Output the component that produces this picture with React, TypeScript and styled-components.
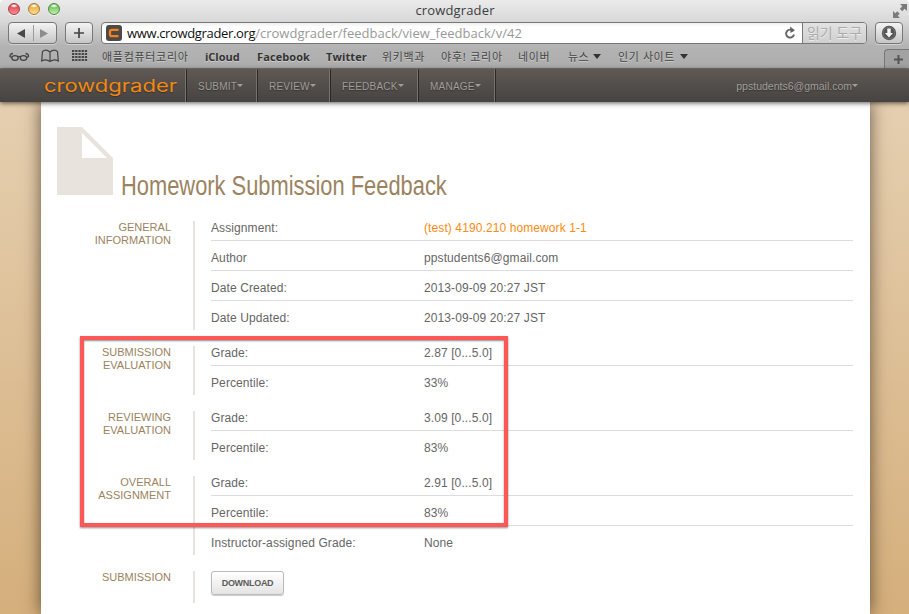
import React from "react";
import styled, { createGlobalStyle } from "styled-components";

const UI = `"Open Sans", "Noto Sans", "Noto Sans CJK KR", sans-serif`;
const BODY = `"Liberation Sans", Arial, sans-serif`;

const GlobalStyle = createGlobalStyle`
  * { box-sizing: border-box; }
  body { margin: 0; overflow: hidden; }
`;

const Window = styled.div`
  width: 909px;
  height: 614px;
  display: flex;
  flex-direction: column;
  overflow: hidden;
  font-family: ${UI};
  border-radius: 4px 4px 0 0;
`;

const Chrome = styled.header`
  height: 69px;
  flex: none;
  display: flex;
  flex-direction: column;
  background: linear-gradient(#ebebeb 0, #d9d9d9 20px, #b3b3b3 46px, #adadad 68px);
  border-bottom: 1px solid #7e7b78;
`;

const TitleBar = styled.div`
  height: 22px;
  flex: none;
  display: grid;
  grid-template-columns: 80px 1fr 80px;
  align-items: center;
  padding: 0 1px 3px 8px;
`;

const Lights = styled.div`
  display: flex;
  gap: 8px;
  margin-top: -1px;
`;

const Light = styled.span<{ $from: string; $to: string; $edge: string }>`
  width: 12px;
  height: 12px;
  border-radius: 50%;
  border: 1px solid ${(p) => p.$edge};
  background: radial-gradient(ellipse 4px 2px at 50% 18%, #fff 20%, transparent 100%),
    linear-gradient(${(p) => p.$from}, ${(p) => p.$to});
  box-shadow: 0 1px 0 #f4f4f4;
`;

const WindowTitle = styled.div`
  text-align: center;
  font-size: 13px;
  line-height: 18px;
  letter-spacing: 0.15px;
  color: #3d3d3d;
  padding-right: 6px;
`;

const Expand = styled.svg`
  justify-self: end;
  width: 16px;
  height: 16px;
`;

const Toolbar = styled.div`
  height: 22px;
  flex: none;
  display: flex;
  padding: 0 6px 0 8px;
`;

const Button = styled.div<{ $width: number; $gap: number }>`
  width: ${(p) => p.$width}px;
  height: 22px;
  flex: none;
  margin-right: ${(p) => p.$gap}px;
  display: flex;
  align-items: center;
  justify-content: center;
  border: 1px solid #777;
  border-radius: 4px;
  background: linear-gradient(#f4f4f4, #c6c6c6);
  box-shadow: 0 1px 0 #d2d2d2;
`;

const Address = styled.div`
  width: 766px;
  height: 22px;
  flex: none;
  margin-right: 8px;
  display: flex;
  align-items: center;
  overflow: hidden;
  border: 1px solid #777;
  border-radius: 4px;
  background: linear-gradient(#efefef, #fff 4px);
  font-size: 13px;
`;

const Favicon = styled.span`
  width: 16px;
  height: 16px;
  flex: none;
  margin: 0 5px 0 4px;
  display: flex;
  align-items: center;
  justify-content: center;
  border-radius: 3px;
  background: #4c4947;
`;

const Host = styled.span`
  color: #111;
  letter-spacing: -0.35px;
  line-height: 20px;
`;

const Path = styled.span`
  color: #999;
  letter-spacing: 0.02px;
  line-height: 20px;
  flex: 1;
`;

const Reader = styled.span`
  width: 64px;
  height: 20px;
  flex: none;
  margin-left: 6px;
  border-left: 1px solid #777;
  background: linear-gradient(#e2e2e2, #cfcfcf);
  color: #aaa;
  font-size: 14px;
  line-height: 19px;
  text-align: center;
  white-space: nowrap;
  text-shadow: 0 1px 0 #eee;
`;

const Bookmarks = styled.div`
  height: 24px;
  flex: none;
  display: flex;
  align-items: center;
  font-size: 11px;
  line-height: 24px;
  padding-left: 8px;
  color: #333;
  text-shadow: 0 1px 0 #ccc;
`;

const Glyph = styled.svg<{ $gap: number }>`
  flex: none;
  margin-right: ${(p) => p.$gap}px;
`;

const Bookmark = styled.span<{ $width: number; $bold?: boolean; $track?: number }>`
  flex: none;
  width: ${(p) => p.$width}px;
  padding-top: 1px;
  font-weight: ${(p) => (p.$bold ? 700 : 400)};
  letter-spacing: ${(p) => p.$track ?? 0}px;
  color: ${(p) => (p.$bold ? "#333" : "#444")};
  white-space: nowrap;
`;

const Arrow = styled.i<{ $size: number; $color: string; $gap: number }>`
  display: inline-block;
  vertical-align: middle;
  margin-left: ${(p) => p.$gap}px;
  margin-top: -3px;
  border: ${(p) => p.$size}px solid transparent;
  border-top: ${(p) => p.$size + (p.$size > 3 ? 1 : 0)}px solid ${(p) => p.$color};
  border-bottom: 0;
`;

const NewTab = styled.div`
  width: 25px;
  height: 19px;
  margin-left: auto;
  padding-left: 3px;
  align-self: flex-end;
  display: flex;
  align-items: center;
  justify-content: center;
  border: 1px solid #777;
  border-right: 0;
  border-bottom: 0;
  border-radius: 4px 0 0 0;
  background: #a2a2a2;
`;

const NavBar = styled.nav`
  height: 33px;
  flex: none;
  z-index: 1;
  display: flex;
  padding-left: 45px;
  background: linear-gradient(#5e5955, #474340);
  box-shadow: 0 1px 5px rgba(0, 0, 0, 0.65);
  font-family: ${BODY};
  font-size: 10px;
  line-height: 35px;
  color: #a19e9a;
  text-shadow: 0 1px 1px #333;
`;

const Logo = styled.svg`
  width: 140px;
  height: 33px;
  flex: none;
  overflow: visible;
`;

const NavItem = styled.span<{ $width: number }>`
  width: ${(p) => p.$width}px;
  flex: none;
  padding-left: 12px;
  border-left: 1px solid #77726d;
  box-shadow: inset 1px 0 0 #2b2826;
  letter-spacing: 0.22px;
  white-space: nowrap;
`;

const Account = styled.span`
  margin-left: auto;
  padding-right: 51px;
  font-size: 10.5px;
`;

const NavEnd = styled.span`
  border-left: 1px solid #77726d;
  box-shadow: inset 1px 0 0 #2b2826;
  width: 2px;
`;

const Backdrop = styled.div`
  height: 512px;
  flex: none;
  padding: 0 39px 0 41px;
  background: linear-gradient(#e5cfb0, #d5af7c);
`;

const Sheet = styled.main`
  position: relative;
  height: 512px;
  padding: 25px 17px 0 16px;
  background: #fff;
  box-shadow: 0 0 16px rgba(45, 30, 15, 0.7);
  font-family: ${BODY};
  font-size: 12px;
  color: #666;
`;

const Heading = styled.div`
  height: 94px;
  display: flex;
  gap: 8px;
`;

const Title = styled.h1`
  margin: 42px 0 0;
  font-weight: 400;
  font-size: 27px;
  line-height: 34px;
  white-space: nowrap;
  color: #9b8360;
  transform: scaleX(0.81);
  transform-origin: 0 0;
`;

const Section = styled.section`
  display: grid;
  grid-template-columns: 114px 1fr;
  column-gap: 22px;
  margin-bottom: 16px;
`;

const Label = styled.div`
  width: 80px;
  justify-self: end;
  text-align: right;
  font-size: 11px;
  line-height: 13px;
  color: #9b8360;
`;

const Rows = styled.div<{ $min?: number }>`
  border-left: 2px solid #e8e3dd;
  padding-left: 16px;
  min-height: ${(p) => p.$min ?? 0}px;
`;

const Row = styled.div`
  display: grid;
  grid-template-columns: 213px 1fr;
  height: 30px;
  padding-top: 10px;
  line-height: 14px;
  letter-spacing: 0.1px;
  border-bottom: 1px solid #ddd;
  &:first-child {
    height: 20px;
    padding-top: 0;
  }
  &:last-child {
    height: 29px;
    border-bottom: 0;
  }
`;

const Value = styled.span<{ $link?: boolean }>`
  color: ${(p) => (p.$link ? "#fb8b12" : "#666")};
`;

const Download = styled.button`
  display: block;
  width: 73px;
  height: 24px;
  padding: 0;
  border: 1px solid #bbb;
  border-radius: 3px;
  background: linear-gradient(#fff, #e4e4e4);
  box-shadow: 0 1px 1px #ccc;
  font: 700 9px ${BODY};
  letter-spacing: -0.3px;
  color: #5c5c5c;
`;

const Highlight = styled.div`
  position: absolute;
  left: 39px;
  top: 234px;
  width: 428px;
  height: 191px;
  border: 4px solid #fd5757;
  box-shadow: 0 1px 2px rgba(0, 0, 0, 0.45), inset 0 1px 2px rgba(0, 0, 0, 0.45);
`;

type Entry = [string, string];
const sections: { label: string[]; rows: Entry[] }[] = [
  {
    label: ["GENERAL", "INFORMATION"],
    rows: [
      ["Assignment:", "(test) 4190.210 homework 1-1"],
      ["Author", "ppstudents6@gmail.com"],
      ["Date Created:", "2013-09-09 20:27 JST"],
      ["Date Updated:", "2013-09-09 20:27 JST"],
    ],
  },
  { label: ["SUBMISSION", "EVALUATION"], rows: [["Grade:", "2.87 [0...5.0]"], ["Percentile:", "33%"]] },
  { label: ["REVIEWING", "EVALUATION"], rows: [["Grade:", "3.09 [0...5.0]"], ["Percentile:", "83%"]] },
  {
    label: ["OVERALL", "ASSIGNMENT"],
    rows: [["Grade:", "2.91 [0...5.0]"], ["Percentile:", "83%"], ["Instructor-assigned Grade:", "None"]],
  },
];

const menu: [string, number][] = [["SUBMIT", 71], ["REVIEW", 73], ["FEEDBACK", 88], ["MANAGE", 77]];

export default function App() {
  return (
    <>
      <GlobalStyle />
      <Window>
        <Chrome>
          <TitleBar>
            <Lights>
              <Light $from="#d83a48" $to="#ff8d92" $edge="#a34148" />
              <Light $from="#e59a35" $to="#ffe08a" $edge="#a87737" />
              <Light $from="#5cb34f" $to="#c3f2a5" $edge="#4f8848" />
            </Lights>
            <WindowTitle>crowdgrader</WindowTitle>
            <Expand viewBox="0 0 16 16" fill="#7b7b7b">
              <path d="M8 2h7v7l-2.300-2.300-2.500 2.500-2.400-2.400 2.500-2.500z" />
              <path d="M1 16V9l2.300 2.300 2-2 2.400 2.400-2 2L8 16z" />
            </Expand>
          </TitleBar>
          <Toolbar>
            <Button $width={49} $gap={8}>
              <svg width="47" height="20" viewBox="0 0 47 20">
                <path d="M8 10.500 16 6v9z" fill="#484848" />
                <path d="M24.500 2v16" stroke="#9c9c9c" />
                <path d="M39 10.500 31 6v9z" fill="#8d8d8d" />
              </svg>
            </Button>
            <Button $width={28} $gap={8}>
              <svg width="12" height="12" viewBox="0 0 12 12">
                <path d="M6 1v10M1 6h10" stroke="#444" strokeWidth="1.700" />
              </svg>
            </Button>
            <Address>
              <Favicon>
                <svg width="16" height="16" viewBox="0 0 16 16">
                  <path d="M12.500 4.800H6q-2 0-2 2v2.400q0 2 2 2h6.500" fill="none" stroke="#f58220" strokeWidth="2.300" />
                </svg>
              </Favicon>
              <Host>www.crowdgrader.org</Host>
              <Path>/crowdgrader/feedback/view_feedback/v/42</Path>
              <svg width="12" height="14" viewBox="0 0 12 14">
                <path d="M9.300 5.200A4 4 0 1 0 10 8.500" fill="none" stroke="#666" strokeWidth="1.900" />
                <path d="M6 .5 11 4.200 6.500 7z" fill="#666" />
              </svg>
              <Reader>읽기 도구</Reader>
            </Address>
            <Button $width={28} $gap={0}>
              <svg width="16" height="16" viewBox="0 0 16 16">
                <circle cx="8" cy="8" r="7.200" fill="#555" />
                <circle cx="8" cy="8" r="5.800" fill="none" stroke="#777" strokeWidth=".8" />
                <path d="M6.300 3.500h3.400V8H12l-4 4.500L4 8h2.300z" fill="#f5f5f5" />
              </svg>
            </Button>
          </Toolbar>
          <Bookmarks>
            <Glyph $gap={11} width="22" height="14" viewBox="0 0 22 14" fill="none" stroke="#444" strokeWidth="1.300">
              <ellipse cx="7" cy="9" rx="3.200" ry="2.300" />
              <ellipse cx="15.500" cy="9" rx="3.200" ry="2.300" />
              <path d="M10 8q1.200-1 2.400 0M3.800 8.500 2 7.500Q2 4.500 5 4.500M18.700 8.500 20.500 7.500Q20.500 4.500 17.500 4.500" />
            </Glyph>
            <Glyph $gap={13} width="18" height="14" viewBox="0 0 18 14" fill="none" stroke="#444" strokeWidth="1.200">
              <path d="M9 3Q5-.5 1.500 2.500L.7 12Q5 9.500 9 12.500 13 9.500 17.300 12L16.500 2.500Q13-.5 9 3v9.500" />
            </Glyph>
            <Glyph $gap={14} width="16" height="12" viewBox="0 0 16 12" fill="#444">
              {[0, 3, 6, 9].map((y) =>
                [0, 3.2, 6.4, 9.6, 12.8].map((x) => <rect key={`${x}-${y}`} x={x} y={y} width="2.300" height="2" />)
              )}
            </Glyph>
            <Bookmark $width={103} $track={0.7}>애플컴퓨터코리아</Bookmark>
            <Bookmark $width={52} $bold>iCloud</Bookmark>
            <Bookmark $width={69} $bold $track={0.1}>Facebook</Bookmark>
            <Bookmark $width={56} $bold $track={0.1}>Twitter</Bookmark>
            <Bookmark $width={59} $track={0.6}>위키백과</Bookmark>
            <Bookmark $width={77} $track={0.8}>야후! 코리아</Bookmark>
            <Bookmark $width={50} $track={0.6}>네이버</Bookmark>
            <Bookmark $width={50} $track={0.3}>
              뉴스
              <Arrow $size={4} $color="#333" $gap={4} />
            </Bookmark>
            <Bookmark $width={90} $track={0.6}>
              인기 사이트
              <Arrow $size={4} $color="#333" $gap={5} />
            </Bookmark>
            <NewTab>
              <svg width="9" height="9" viewBox="0 0 9 9">
                <path d="M4.500 0v9M0 4.500h9" stroke="#555" strokeWidth="2" />
              </svg>
            </NewTab>
          </Bookmarks>
        </Chrome>
        <NavBar>
          <Logo viewBox="0 0 140 33">
            <text
              x="-1"
              y="22.500"
              textLength="133"
              lengthAdjust="spacingAndGlyphs"
              fontFamily="Inter, sans-serif"
              fontSize="17"
              fill="#f58812"
            >
              crowdgrader
            </text>
          </Logo>
          {menu.map(([name, width]) => (
            <NavItem key={name} $width={width}>
              {name}
              <Arrow $size={3} $color="#a19e9a" $gap={0} />
            </NavItem>
          ))}
          <NavEnd />
          <Account>
            ppstudents6@gmail.com
            <Arrow $size={3} $color="#a19e9a" $gap={0} />
          </Account>
        </NavBar>
        <Backdrop>
          <Sheet>
            <Heading>
              <svg width="56" height="69" viewBox="0 0 56 69">
                <path fillRule="evenodd" d="M0 0h25l31 31v37H0zM25 6v25h25z" fill="#e8e3dd" />
              </svg>
              <Title>Homework Submission Feedback</Title>
            </Heading>
            {sections.map((section) => (
              <Section key={section.label.join()}>
                <Label>
                  {section.label.map((line) => (
                    <div key={line}>{line}</div>
                  ))}
                </Label>
                <Rows>
                  {section.rows.map(([name, value]) => (
                    <Row key={name}>
                      <span>{name}</span>
                      <Value $link={name === "Assignment:"}>{value}</Value>
                    </Row>
                  ))}
                </Rows>
              </Section>
            ))}
            <Section>
              <Label>SUBMISSION</Label>
              <Rows $min={32}>
                <Download>DOWNLOAD</Download>
              </Rows>
            </Section>
            <Highlight />
          </Sheet>
        </Backdrop>
      </Window>
    </>
  );
}
